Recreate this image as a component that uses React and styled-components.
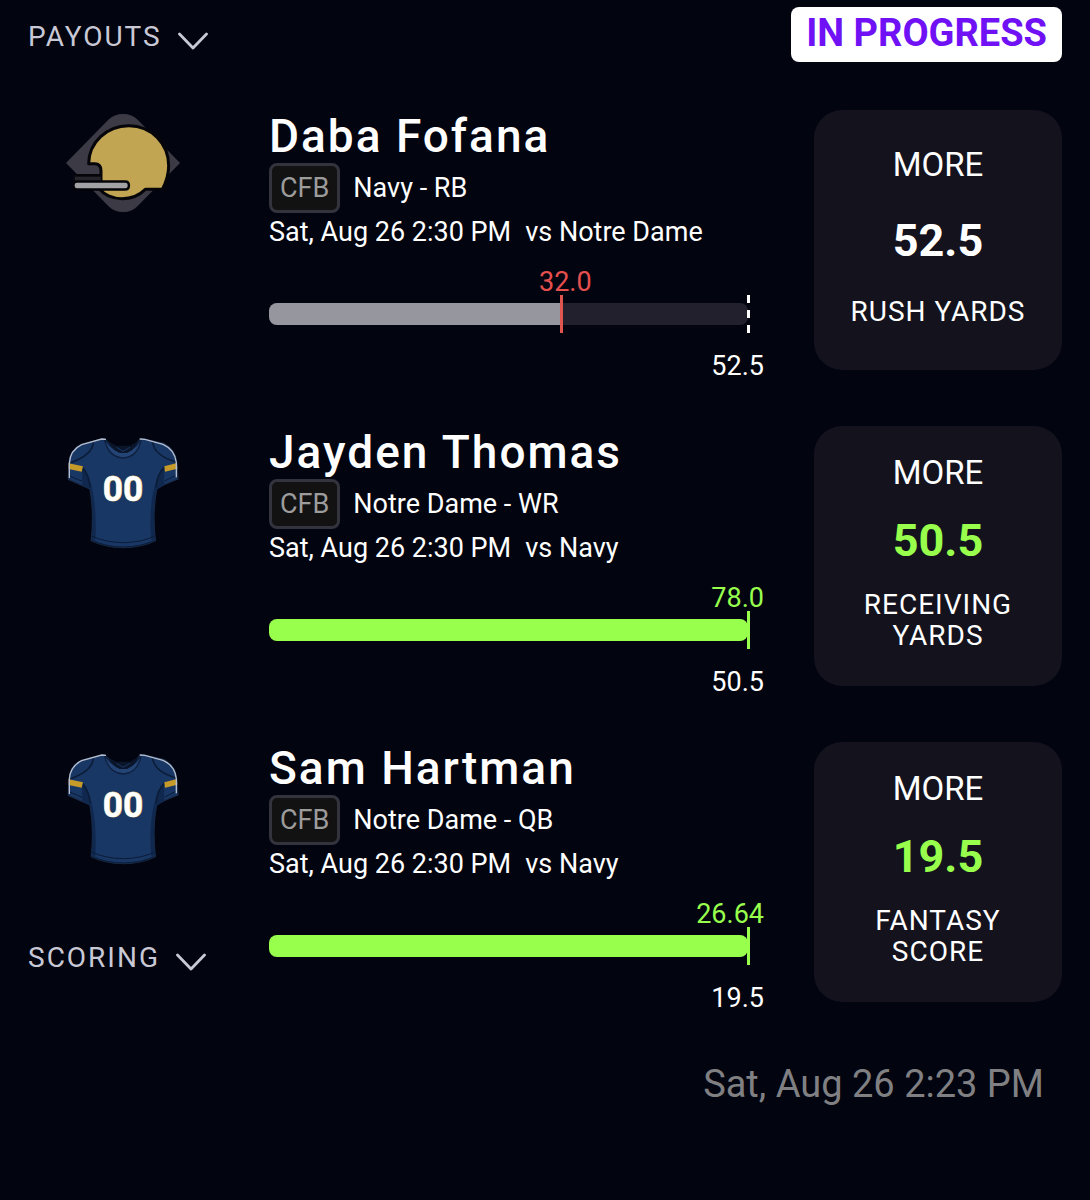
import React from "react";
import styled, { createGlobalStyle } from "styled-components";

const GlobalStyle = createGlobalStyle`
  * { box-sizing: border-box; }
  body {
    margin: 0;
    background: #020410;
    color: #fff;
    font-family: Roboto, "Liberation Sans", sans-serif;
    font-size: 27px;
  }
`;

const Page = styled.div`
  min-height: 100vh;
  padding: 7px 28px 48px;
`;

const Header = styled.header`
  display: flex;
  align-items: baseline;
  justify-content: space-between;
  margin-bottom: 48px;
`;

const Toggle = styled.button`
  display: flex;
  align-items: center;
  gap: 16px;
  padding: 0;
  border: 0;
  background: none;
  color: #c9c9d6;
  font: inherit;
  font-size: 28px;
  line-height: 40px;
  letter-spacing: 2px;
  text-transform: uppercase;
  cursor: pointer;
`;

const Status = styled.strong`
  padding: 2px 15px 4px;
  border-radius: 8px;
  background: #fff;
  color: #7011f5;
  font-size: 38px;
  font-weight: 700;
  line-height: 49px;
  text-transform: uppercase;
`;

const Picks = styled.main`
  display: grid;
  gap: 47px;
`;

const Pick = styled.article`
  display: grid;
  grid-template-columns: 191px minmax(0, 1fr) 248px;
  column-gap: 50px;
  align-items: start;
`;

const Side = styled.div`
  display: flex;
  flex-direction: column;
  align-items: flex-start;
  gap: 72px;
`;

const Art = styled.svg`
  display: block;
  width: 116px;
  height: 124px;
  margin-left: 37px;
`;

const Info = styled.div`
  white-space: nowrap;
`;

const Name = styled.h2`
  margin: 0;
  font-size: 46px;
  font-weight: 500;
  line-height: 53px;
  letter-spacing: 2px;
`;

const Team = styled.div`
  display: flex;
  align-items: center;
  gap: 13px;
  line-height: 44px;
`;

const League = styled.span`
  padding: 0 8px;
  border: 3px solid #33333d;
  border-radius: 8px;
  background: #121212;
  color: #9c9c9c;
`;

const Game = styled.div`
  display: flex;
  gap: 14px;
  line-height: 38px;
  margin-bottom: 18px;
`;

const Result = styled.div`
  display: flex;
  color: ${(p) => (p.$hit ? "#98ff4d" : "#e5504f")};
  line-height: 26px;
`;

const Gauge = styled.div`
  position: relative;
  display: flex;
  align-items: center;
  height: 38px;
  margin-right: 16px;
`;

const Track = styled.div`
  flex: 1;
  height: 22px;
  border-radius: 8px;
  overflow: hidden;
  background: #21202c;
`;

const Fill = styled.div`
  height: 100%;
  background: ${(p) => (p.$hit ? "#98ff4d" : "#96969e")};
`;

const Marker = styled.span`
  position: absolute;
  top: 0;
  bottom: 0;
  width: 3px;
  margin-left: -1px;
  background: ${(p) => (p.$hit ? "#98ff4d" : "#e0564f")};
`;

const Goal = styled(Marker)`
  left: 100%;
  background: repeating-linear-gradient(#fff 0 8px, transparent 8px 15px);
`;

const Line = styled.div`
  margin-top: 20px;
  line-height: 26px;
  text-align: right;
`;

const Card = styled.section`
  display: flex;
  flex-direction: column;
  align-items: center;
  justify-content: space-evenly;
  height: 260px;
  padding: 0 24px 8px;
  border-radius: 28px;
  background: #13121d;
  text-align: center;
  text-transform: uppercase;
`;

const Choice = styled.div`
  font-size: 33px;
  line-height: 40px;
`;

const Target = styled.div`
  color: ${(p) => (p.$hit ? "#98ff4d" : "#fff")};
  font-size: 45px;
  font-weight: 700;
  line-height: 42px;
`;

const Stat = styled.div`
  font-size: 28px;
  line-height: 31px;
  letter-spacing: 1px;
`;

const Footer = styled.footer`
  margin-top: 50px;
  padding-right: 18px;
  color: #808083;
  font-size: 38px;
  line-height: 46px;
  text-align: right;
`;

function Chevron() {
  return (
    <svg width="30" height="28" viewBox="0 0 30 28" fill="none" aria-hidden="true">
      <path d="M1.5 11 15 25 28.5 11" stroke="currentColor" strokeWidth="2.8" strokeLinecap="round" strokeLinejoin="round" />
    </svg>
  );
}

function Helmet() {
  return (
    <Art viewBox="195 330 348 372" role="img" aria-label="Gold helmet">
      <path d="M198 489 325 359Q342 342 370 342Q396 342 413 359L540 489 413 618Q396 636 370 636Q342 636 325 618Z" fill="#3b3a45" />
      <path
        d="M266 491A120 115 0 0 1 387 377C454 377 506 431 506 497C506 521 499 545 487 568H436C419 585 394 596 366 596C336 596 311 583 299 567L303 548V512Q303 491 284 491Z"
        fill="#c1a553"
        stroke="#05050a"
        strokeWidth="9"
        strokeLinejoin="round"
      />
      <path d="M224 524H302V544H224Z" fill="#25242a" />
      <path d="M224 526H304" stroke="#05050a" strokeWidth="8" />
      <path d="M222 543H375Q388 543 388 556Q388 570 375 570H222Z" fill="#05050a" stroke="#05050a" strokeWidth="5" />
      <rect x="224" y="548" width="159" height="17" rx="7" fill="#a3a3a5" />
    </Art>
  );
}

function Jersey() {
  return (
    <Art viewBox="75 18 348 372" role="img" aria-label="Navy jersey">
      <path d="M193 56 125 73Q89 89 87 132L85 178 128 197 150 207Q163 275 154 362Q195 382 250 383Q306 382 346 362Q336 275 350 207L372 194 414 177 410 130Q407 88 370 70L303 55 270 92Q249 101 227 89Z" fill="#193765" stroke="#1a2b47" strokeWidth="4" strokeLinejoin="round" />
      <path d="M126 137Q150 163 161 229Q170 294 166 361L154 358Q162 285 151 210L127 196Z" fill="#10284e" />
      <path d="M373 137Q349 163 337 229Q327 294 334 361L346 358Q337 285 349 210L372 194Z" fill="#10284e" />
      <path d="M160 67Q157 105 92 128M338 66Q342 106 408 126M127 142Q145 160 151 202M373 142Q352 160 348 202" fill="none" stroke="#0c1d39" strokeWidth="5" />
      <path d="M88 168 127 184M374 183 410 165M155 348Q194 367 250 368Q306 367 344 348M156 361Q195 380 250 381Q306 380 344 361" fill="none" stroke="#0b1c36" strokeWidth="3" />
      <path d="M193 57Q205 112 250 114Q293 112 304 57L288 78 261 97H239L211 78Z" fill="#234474" stroke="#0e2140" strokeWidth="4" />
      <path d="M206 65Q218 98 250 99Q282 98 294 64L270 77H230Z" fill="#0a152a" />
      <path d="M230 82 249 94 270 82" fill="none" stroke="#193765" strokeWidth="3" />
      <path d="M86 130 129 139 125 155 86 147Z" fill="#c69b29" />
      <path d="M411 129 373 139 375 155 412 146Z" fill="#c69b29" />
      <path d="M198 58 185 57 125 74Q90 91 88 130V174M299 57 315 58 369 73Q405 89 409 128V172" fill="none" stroke="#b4bed0" strokeWidth="4" />
      <text
        x="249"
        y="242"
        textAnchor="middle"
        fontFamily="Roboto, 'Liberation Sans', sans-serif"
        fontSize="106"
        fontWeight="700"
        fill="#fff"
        stroke="#d3bd7b"
        strokeWidth="3"
        paintOrder="stroke"
      >
        00
      </text>
    </Art>
  );
}

const picks = [
  { name: "Daba Fofana", team: "Navy - RB", opponent: "Notre Dame", result: "32.0", target: "52.5", stat: "Rush Yards", art: Helmet },
  { name: "Jayden Thomas", team: "Notre Dame - WR", opponent: "Navy", result: "78.0", target: "50.5", stat: "Receiving Yards", art: Jersey },
  { name: "Sam Hartman", team: "Notre Dame - QB", opponent: "Navy", result: "26.64", target: "19.5", stat: "Fantasy Score", art: Jersey, scoring: true },
];

function PickRow({ pick }) {
  const ratio = Math.min(1, Number(pick.result) / Number(pick.target));
  const hit = ratio === 1;
  const Picture = pick.art;
  return (
    <Pick>
      <Side>
        <Picture />
        {pick.scoring && (
          <Toggle type="button">
            Scoring <Chevron />
          </Toggle>
        )}
      </Side>
      <Info>
        <Name>{pick.name}</Name>
        <Team>
          <League>CFB</League>
          <span>{pick.team}</span>
        </Team>
        <Game>
          <span>Sat, Aug 26 2:30 PM</span>
          <span>vs {pick.opponent}</span>
        </Game>
        <Result $hit={hit}>
          <span style={{ marginLeft: hit ? "auto" : `calc((100% - 16px) * ${ratio} - 22px)` }}>{pick.result}</span>
        </Result>
        <Gauge>
          <Track>
            <Fill $hit={hit} style={{ width: `${ratio * 100}%` }} />
          </Track>
          {!hit && <Goal />}
          <Marker $hit={hit} style={{ left: `${ratio * 100}%` }} />
        </Gauge>
        <Line>{pick.target}</Line>
      </Info>
      <Card>
        <Choice>More</Choice>
        <Target $hit={hit}>{pick.target}</Target>
        <Stat>{pick.stat}</Stat>
      </Card>
    </Pick>
  );
}

export default function App() {
  return (
    <Page>
      <GlobalStyle />
      <Header>
        <Toggle type="button">
          Payouts <Chevron />
        </Toggle>
        <Status>In Progress</Status>
      </Header>
      <Picks>
        {picks.map((pick) => (
          <PickRow key={pick.name} pick={pick} />
        ))}
      </Picks>
      <Footer>Sat, Aug 26 2:23 PM</Footer>
    </Page>
  );
}
